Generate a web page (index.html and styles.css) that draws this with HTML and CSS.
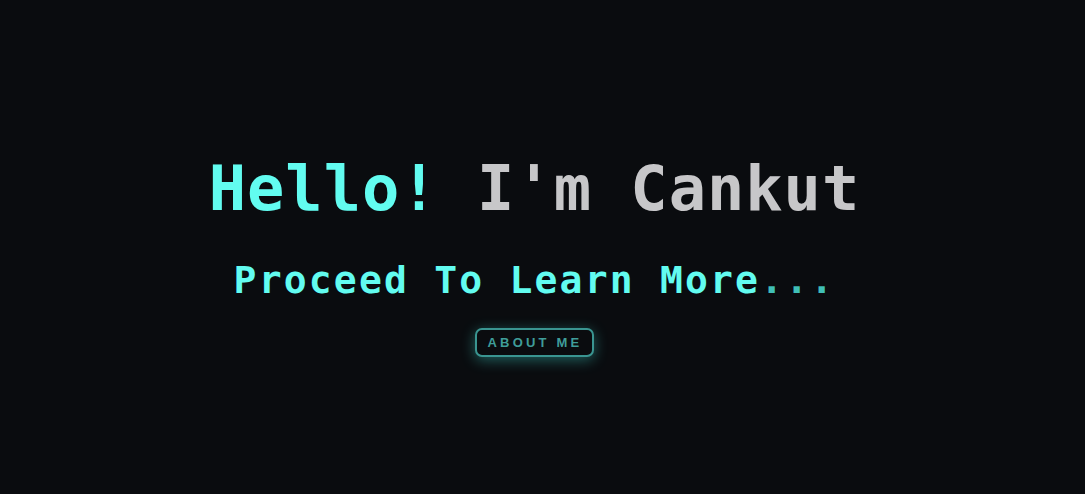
FILE: index.html
```html
<!DOCTYPE html>
<html>
<head>
<meta charset="utf-8">
<link rel="stylesheet" href="styles.css">
</head>
<body>
<main class="hero">
  <h1 class="title"><span class="accent">Hello!</span> <span class="name">I'm Cankut</span></h1>
  <p class="subtitle">Proceed To Learn More<span class="dots">...</span></p>
  <a class="btn" href="#">About Me</a>
</main>
</body>
</html>
```
FILE: styles.css
```css
html, body {
  margin: 0;
  padding: 0;
  background: #0a0c0f;
  height: 100%;
}
.hero {
  display: flex;
  flex-direction: column;
  align-items: center;
  padding-top: 154px;
  padding-right: 16px;
  font-family: "DejaVu Sans Mono", "Liberation Mono", monospace;
}
.title {
  margin: 0;
  font-size: 62px;
  font-weight: bold;
  letter-spacing: 1px;
  line-height: 70px;
  white-space: nowrap;
}
.accent { color: #62fcf0; }
.name { color: #c7c7c9; }
.subtitle {
  margin: 36px 0 0;
  font-size: 38px;
  font-weight: bold;
  letter-spacing: 2.2px;
  line-height: 40px;
  color: #62fcf0;
}
.dots { color: #3fbfb6; }
.btn {
  margin-top: 28px;
  display: inline-block;
  padding: 6px 10px 6px 11px;
  border: 2px solid #3a9591;
  border-radius: 7px;
  background: #0a0c0f;
  color: #3f9d99;
  font-family: "Liberation Sans", Arial, sans-serif;
  font-weight: bold;
  font-size: 13px;
  line-height: 13px;
  letter-spacing: 3.2px;
  text-decoration: none;
  text-transform: uppercase;
  box-shadow: 0 3px 14px rgba(60, 200, 190, 0.45);
}
```
